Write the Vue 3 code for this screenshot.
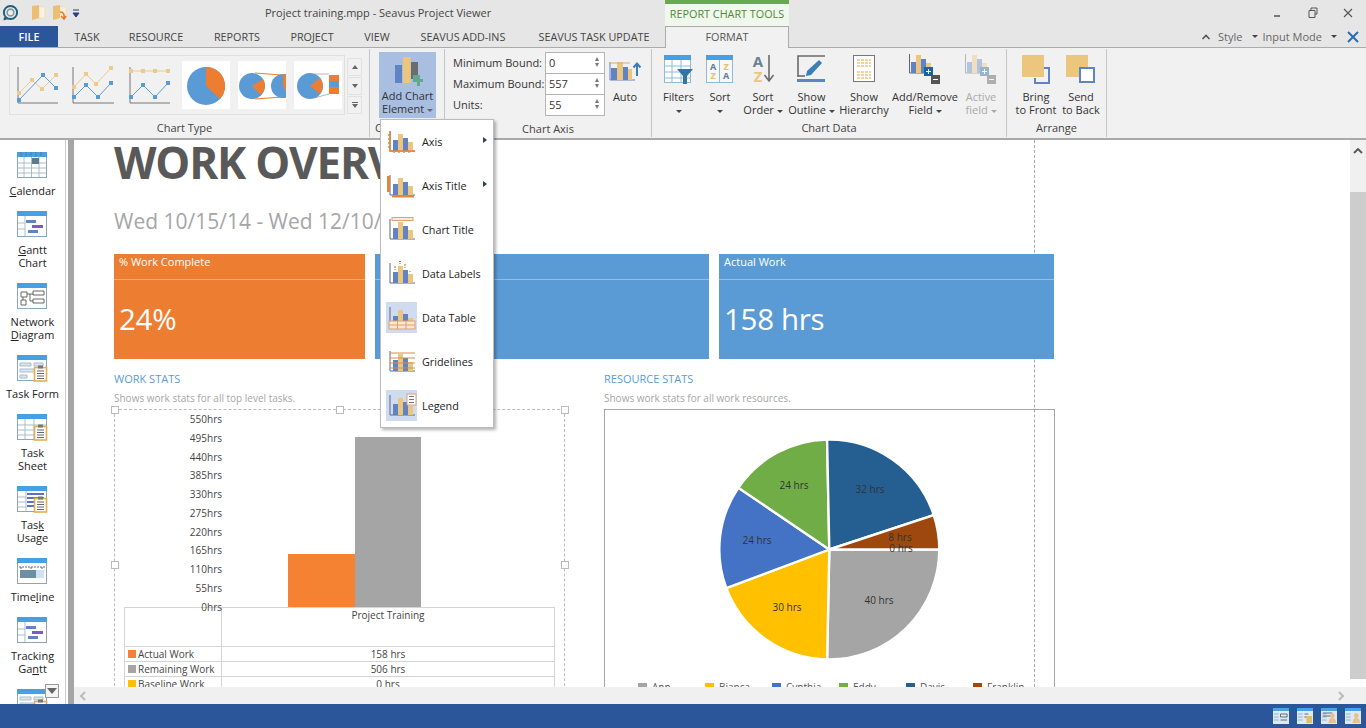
<script setup>
const tabs = [
  { label: 'TASK', width: 58 },
  { label: 'RESOURCE', width: 80 },
  { label: 'REPORTS', width: 82 },
  { label: 'PROJECT', width: 68 },
  { label: 'VIEW', width: 62 },
  { label: 'SEAVUS ADD-INS', width: 110 },
  { label: 'SEAVUS TASK UPDATE', width: 152 }
]

// sidebar views, pre/key/post splits the underlined mnemonic
const views = [
  { id: 'calendar', lines: [['', 'C', 'alendar']] },
  { id: 'gantt', lines: [['', 'G', 'antt'], ['Chart', '', '']] },
  { id: 'network', lines: [['Network', '', ''], ['', 'D', 'iagram']] },
  { id: 'form', lines: [['Task Form', '', '']] },
  { id: 'sheet', lines: [['Task', '', ''], ['Sheet', '', '']] },
  { id: 'usage', lines: [['Tas', 'k', ''], ['Usage', '', '']] },
  { id: 'timeline', lines: [['Time', 'l', 'ine']] },
  { id: 'tracking', lines: [['Tracking', '', ''], ['Ga', 'n', 'tt']] },
  { id: 'form', lines: [] }
]

const menuItems = [
  { label: 'Axis', kind: 'axis', arrow: true },
  { label: 'Axis Title', kind: 'axisTitle', arrow: true },
  { label: 'Chart Title', kind: 'chartTitle' },
  { label: 'Data Labels', kind: 'labels' },
  { label: 'Data Table', kind: 'table', on: true },
  { label: 'Gridelines', kind: 'grid' },
  { label: 'Legend', kind: 'legend', on: true }
]

const cards = [
  { title: '% Work Complete', value: '24%', color: 'orange' },
  { title: 'Remaining Work', value: '506 hrs', color: 'blue' },
  { title: 'Actual Work', value: '158 hrs', color: 'blue' }
]

const axisLabels = ['550hrs', '495hrs', '440hrs', '385hrs', '330hrs', '275hrs', '220hrs', '165hrs', '110hrs', '55hrs', '0hrs']

const workRows = [
  { name: 'Actual Work', value: '158 hrs', color: '#f58233' },
  { name: 'Remaining Work', value: '506 hrs', color: '#a5a5a5' },
  { name: 'Baseline Work', value: '0 hrs', color: '#ffc000' }
]

const people = [
  { name: 'Ann', hrs: 40, color: '#a5a5a5' },
  { name: 'Bianca', hrs: 30, color: '#ffc000' },
  { name: 'Cynthia', hrs: 24, color: '#4472c4' },
  { name: 'Eddy', hrs: 24, color: '#70ad47' },
  { name: 'Davis', hrs: 32, color: '#255e91' },
  { name: 'Franklin', hrs: 8, color: '#9e480e' }
]

const pieLabels = [
  { text: '40 hrs', x: 274, y: 194 },
  { text: '30 hrs', x: 182, y: 201 },
  { text: '24 hrs', x: 152, y: 134 },
  { text: '24 hrs', x: 189, y: 79 },
  { text: '32 hrs', x: 265, y: 83 },
  { text: '8 hrs', x: 295, y: 131 },
  { text: '0 hrs', x: 296, y: 142 }
]

const cx = 224.3
const cy = 139.5
const r = 110
const total = people.reduce((sum, p) => sum + p.hrs, 0)

let start = 0
const slices = people.map((p) => {
  const end = start + (p.hrs / total) * Math.PI * 2
  const x1 = cx + r * Math.cos(start)
  const y1 = cy + r * Math.sin(start)
  const x2 = cx + r * Math.cos(end)
  const y2 = cy + r * Math.sin(end)
  const large = end - start > Math.PI ? 1 : 0
  start = end
  return {
    color: p.color,
    d: `M${cx} ${cy}L${x1.toFixed(2)} ${y1.toFixed(2)}A${r} ${r} 0 ${large} 1 ${x2.toFixed(2)} ${y2.toFixed(2)}Z`
  }
})

const legendX = [33, 100, 167, 234, 301, 368]
</script>

<template>
  <div class="app">
    <!-- title bar -->
    <div class="titlebar">
      <div class="qat">
        <svg width="18" height="18" viewBox="0 0 18 18">
          <circle cx="9.5" cy="8.5" r="6.6" fill="#e8eef0" stroke="#1d5f80" stroke-width="2" />
          <circle cx="9.5" cy="8.5" r="3.4" fill="none" stroke="#8a9699" stroke-width="1.6" />
          <path d="M3 13 L2.5 16.5 L7 15 Z" fill="#1d5f80" />
        </svg>
        <svg class="folder first" width="16" height="18" viewBox="0 0 16 18">
          <path d="M8 3 H14 V14 H8 Z" fill="#fbf1de" stroke="#edd9b0" stroke-width=".6" />
          <path d="M1 2 L8 1 V14 L1 16 Z" fill="#ecbe73" />
        </svg>
        <svg class="folder" width="16" height="18" viewBox="0 0 16 18">
          <path d="M8 3 H14 V14 H8 Z" fill="#fbf1de" stroke="#edd9b0" stroke-width=".6" />
          <path d="M1 2 L8 1 V14 L1 16 Z" fill="#ecbe73" />
          <path d="M8 8 Q13 8 12 14 M9 12 L12 15 L14 12" fill="none" stroke="#e07b2e" stroke-width="1.6" />
        </svg>
        <svg class="qatMore" width="8" height="9" viewBox="0 0 8 9">
          <path d="M1 1 H7 M1 4 H7 L4 8 Z" fill="#2b3f78" stroke="#2b3f78" />
        </svg>
      </div>
      <div class="docTitle">Project training.mpp - Seavus Project Viewer</div>
      <div class="contextTab">REPORT CHART TOOLS</div>
      <div class="winBtns">
        <svg width="12" height="12" viewBox="0 0 12 12"><rect x="3" y="8" width="6" height="2" fill="#777" /></svg>
        <svg width="12" height="12" viewBox="0 0 12 12"><path d="M4 3 V1 H10 V7 H8 M2 3.5 H8 V10.5 H2 Z" fill="none" stroke="#555" /></svg>
        <svg width="12" height="12" viewBox="0 0 12 12"><path d="M2 2 L10 10 M10 2 L2 10" stroke="#555" stroke-width="1.1" /></svg>
      </div>
    </div>

    <!-- tabs -->
    <div class="tabrow">
      <div class="tab file">FILE</div>
      <div v-for="t in tabs" :key="t.label" class="tab" :style="{ width: t.width + 'px' }">{{ t.label }}</div>
      <div class="tab format">FORMAT</div>
      <div class="tabRight">
        <svg width="10" height="8" viewBox="0 0 10 8"><path d="M1.5 6 L5 2.5 L8.5 6" fill="none" stroke="#555" stroke-width="1.6" /></svg>
        <span class="styleLbl">Style</span>
        <span class="caret tabCaret"></span>
        <span class="modeLbl">Input Mode</span>
        <span class="caret tabCaret"></span>
        <svg class="tabClose" width="12" height="12" viewBox="0 0 12 12"><path d="M1 1 L11 11 M11 1 L1 11" stroke="#2b6cb0" stroke-width="2" /></svg>
      </div>
    </div>

    <!-- ribbon -->
    <div class="ribbon">
      <div class="group groupType">
        <div class="groupBody">
          <div class="gallery">
            <svg class="thumb" viewBox="0 0 48 48">
              <path d="M4 6 V42 H44" fill="none" stroke="#777" />
              <path d="M5 32 L18 19 L28 28 L42 14" fill="none" stroke="#ecc98d" />
              <path d="M5 39 L29 14 L42 27" fill="none" stroke="#5b9bd5" />
              <path d="M3 30h4v4h-4zM16 17h4v4h-4zM26 26h4v4h-4zM40 12h4v4h-4z" fill="#ecc98d" />
              <path d="M3 37h4v4h-4zM27 12h4v4h-4zM40 25h4v4h-4z" fill="#5b9bd5" />
            </svg>
            <svg class="thumb" viewBox="0 0 48 48">
              <path d="M3 6 V42 H44" fill="none" stroke="#777" />
              <path d="M4 26 L16 13 L26 23 L41 7" fill="none" stroke="#ecc98d" />
              <path d="M4 36 L16 24 L28 36 L41 22" fill="none" stroke="#5b9bd5" />
              <path d="M2 24h4v4h-4zM14 11h4v4h-4zM24 21h4v4h-4zM39 5h4v4h-4z" fill="#ecc98d" />
              <path d="M2 34h4v4h-4zM14 22h4v4h-4zM26 34h4v4h-4zM39 20h4v4h-4z" fill="#5b9bd5" />
            </svg>
            <svg class="thumb" viewBox="0 0 48 48">
              <path d="M4 6 V42 H44" fill="none" stroke="#777" />
              <path d="M5 10 H42" fill="none" stroke="#ecc98d" />
              <path d="M5 36 L17 24 L29 36 L42 22" fill="none" stroke="#5b9bd5" />
              <path d="M3 8h4v4h-4zM15 8h4v4h-4zM27 8h4v4h-4zM40 8h4v4h-4z" fill="#ecc98d" />
              <path d="M3 34h4v4h-4zM15 22h4v4h-4zM27 34h4v4h-4zM40 20h4v4h-4z" fill="#5b9bd5" />
            </svg>
            <svg class="thumb pieThumb" viewBox="0 0 48 48">
              <circle cx="24" cy="25" r="19" fill="#5b9bd5" />
              <path d="M24 25 L24 6 A19 19 0 0 1 38 38 Z" fill="#ed7d31" />
            </svg>
            <svg class="thumb pieThumb" viewBox="0 0 48 48">
              <circle cx="14" cy="25" r="13" fill="#5b9bd5" />
              <path d="M14 25 L25 18 A13 13 0 0 1 23 34 Z" fill="#ed7d31" />
              <path d="M17 12 L44 14 M17 38 L44 36" stroke="#ed7d31" />
              <circle cx="45" cy="25" r="12" fill="#5b9bd5" />
              <path d="M45 25 V13 H48 V30 Z" fill="#ed7d31" />
            </svg>
            <svg class="thumb pieThumb" viewBox="0 0 48 48">
              <circle cx="16" cy="25" r="13" fill="#5b9bd5" />
              <path d="M16 25 L26 17 A13 13 0 0 1 26 33 Z" fill="#ed7d31" />
              <path d="M20 13 H35 M20 37 L35 33" stroke="#999" stroke-width=".7" />
              <rect x="35" y="14" width="10" height="6" fill="#ed7d31" />
              <rect x="35" y="20" width="10" height="6" fill="#5b9bd5" />
              <rect x="35" y="26" width="10" height="7" fill="#ed7d31" />
            </svg>
            <div class="galleryBtns">
              <div class="galBtn"><span class="tri up"></span></div>
              <div class="galBtn"><span class="tri"></span></div>
              <div class="galBtn"><span class="bar"></span><span class="tri"></span></div>
            </div>
          </div>
        </div>
        <div class="groupLabel">Chart Type</div>
      </div>

      <div class="group groupElement">
        <div class="groupBody">
          <div class="addChart">
            <svg width="30" height="30" viewBox="0 0 30 30">
              <rect x="2" y="9" width="7" height="18" fill="#5f83c4" />
              <rect x="10" y="1" width="7.5" height="26" fill="#edc67e" />
              <rect x="18" y="6" width="7" height="17" fill="#6c6c6c" />
              <path d="M20 19 h4 v-0 h3 v4 h4 v3 h-4 v4 h-3 v-4 h-4 z" fill="#66a88f" />
            </svg>
            <div class="addLabel">Add Chart<br />Element <span class="caret light"></span></div>
          </div>
        </div>
        <div class="groupLabel clipLabel">Chart Layout</div>
      </div>

      <div class="group groupAxis">
        <div class="groupBody axisBody">
          <div class="bounds">
            <span>Minimum Bound:</span>
            <div class="spin">0<i></i></div>
            <span>Maximum Bound:</span>
            <div class="spin">557<i></i></div>
            <span>Units:</span>
            <div class="spin">55<i></i></div>
          </div>
          <div class="tool autoTool">
            <div class="toolIcon">
              <svg width="32" height="30" viewBox="0 0 32 30">
                <path d="M1 6 V24 H26" fill="none" stroke="#5f83c4" />
                <rect x="2" y="12" width="6" height="12" fill="#5f83c4" />
                <rect x="8" y="6" width="6" height="18" fill="#edc67e" />
                <rect x="14" y="11" width="5" height="13" fill="#5f83c4" />
                <rect x="19" y="13" width="4" height="11" fill="#edc67e" />
                <path d="M28 20 V8 M24.5 11.5 L28 7.5 L31.5 11.5" fill="none" stroke="#3c7fb8" stroke-width="2" />
                <path d="M1 7 H21" stroke="#e3a878" />
              </svg>
            </div>
            <div class="toolText">Auto</div>
          </div>
        </div>
        <div class="groupLabel">Chart Axis</div>
      </div>

      <div class="group groupData">
        <div class="groupBody dataBody">
          <div class="tool w41">
            <div class="toolIcon">
              <svg width="30" height="30" viewBox="0 0 30 30">
                <rect x=".5" y="2.5" width="26" height="26" fill="#fff" stroke="#8cbbdc" />
                <rect y="1" width="27" height="5" fill="#47a0e3" />
                <path d="M1 12 H27 M1 18 H27 M1 24 H27 M8 6 V28 M17 6 V28" stroke="#8cbbdc" />
                <path d="M13 15 H29 L23 22 V30 H19 V22 Z" fill="#2f75a6" />
              </svg>
            </div>
            <div class="toolText">Filters<br /><span class="caret"></span></div>
          </div>
          <div class="tool w42">
            <div class="toolIcon">
              <svg width="28" height="30" viewBox="0 0 28 30">
                <rect x=".5" y="2.5" width="26" height="26" fill="#f7f7f7" stroke="#8cbbdc" />
                <rect y="1" width="27" height="5" fill="#47a0e3" />
                <path d="M13.5 6 V28" stroke="#8cbbdc" />
                <text x="7" y="16" class="sortA">A</text>
                <text x="7" y="25" class="sortZ">Z</text>
                <text x="20" y="16" class="sortZ">Z</text>
                <text x="20" y="25" class="sortA">A</text>
              </svg>
            </div>
            <div class="toolText">Sort<br /><span class="caret"></span></div>
          </div>
          <div class="tool w44">
            <div class="toolIcon">
              <svg width="24" height="30" viewBox="0 0 24 30">
                <text x="7" y="13" class="orderA">A</text>
                <text x="7" y="28" class="orderZ">Z</text>
                <path d="M18 1 V26 M13.5 21 L18 27 L22.5 21" fill="none" stroke="#6b6b6b" stroke-width="1.6" />
              </svg>
            </div>
            <div class="toolText">Sort<br />Order <span class="caret"></span></div>
          </div>
          <div class="tool w53">
            <div class="toolIcon">
              <svg width="30" height="30" viewBox="0 0 30 30">
                <path d="M1 23 V2 H28" fill="none" stroke="#6a6a6a" stroke-width="1.6" />
                <path d="M1 22 H8" stroke="#6a6a6a" stroke-width="1.6" />
                <rect y="25" width="28" height="3" fill="#5f83c4" />
                <path d="M9 22 L10 17 L22 6 L25 9 L14 21 Z" fill="#3c7fb8" />
              </svg>
            </div>
            <div class="toolText">Show<br />Outline <span class="caret"></span></div>
          </div>
          <div class="tool w52">
            <div class="toolIcon">
              <svg width="24" height="30" viewBox="0 0 24 30">
                <rect x="1.5" y="1.5" width="21" height="26" fill="#fff" stroke="#777" />
                <path d="M5 6 H19 M5 9 H19 M5 12 H19 M5 18 H19 M5 21 H19 M5 24 H19" stroke="#e9c57f" stroke-width="1.4" stroke-dasharray="3 1" />
              </svg>
            </div>
            <div class="toolText">Show<br />Hierarchy</div>
          </div>
          <div class="tool w70">
            <div class="toolIcon">
              <svg width="32" height="30" viewBox="0 0 32 30">
                <path d="M.5 0 V19 H18" fill="none" stroke="#666" />
                <rect x="2" y="8" width="5" height="11" fill="#5f83c4" />
                <rect x="7" y="1" width="5" height="18" fill="#edc67e" />
                <rect x="12" y="5" width="5" height="14" fill="#5f83c4" />
                <rect x="17" y="9" width="5" height="10" fill="#edc67e" />
                <rect x="15" y="13" width="9" height="9" fill="#17639d" />
                <path d="M19.5 15 V20 M17 17.5 H22" stroke="#fff" />
                <rect x="22" y="21" width="9" height="9" fill="#555" />
                <path d="M24 25.5 H29" stroke="#fff" />
              </svg>
            </div>
            <div class="toolText">Add/Remove<br />Field <span class="caret"></span></div>
          </div>
          <div class="tool w42 disabled">
            <div class="toolIcon">
              <svg width="32" height="30" viewBox="0 0 32 30">
                <path d="M.5 0 V19 H18" fill="none" stroke="#666" />
                <rect x="2" y="8" width="5" height="11" fill="#5f83c4" />
                <rect x="7" y="1" width="5" height="18" fill="#edc67e" />
                <rect x="12" y="5" width="5" height="14" fill="#5f83c4" />
                <rect x="17" y="9" width="5" height="10" fill="#edc67e" />
                <rect x="15" y="13" width="9" height="9" fill="#17639d" />
                <path d="M19.5 15 V20 M17 17.5 H22" stroke="#fff" />
                <rect x="22" y="21" width="9" height="9" fill="#555" />
                <path d="M24 25.5 H29" stroke="#fff" />
              </svg>
            </div>
            <div class="toolText">Active<br />field <span class="caret"></span></div>
          </div>
        </div>
        <div class="groupLabel">Chart Data</div>
      </div>

      <div class="group groupArrange">
        <div class="groupBody arrangeBody">
          <div class="tool w44">
            <div class="toolIcon">
              <svg width="30" height="30" viewBox="0 0 30 30">
                <path d="M22 14 H28 V29 H14 V24" fill="none" stroke="#5f83c4" stroke-width="2" />
                <rect x="1" y="1" width="22" height="22" fill="#edc67e" />
              </svg>
            </div>
            <div class="toolText">Bring<br />to Front</div>
          </div>
          <div class="tool w46">
            <div class="toolIcon">
              <svg width="30" height="30" viewBox="0 0 30 30">
                <rect x="0" y="1" width="22" height="22" fill="#edc67e" />
                <rect x="14" y="14" width="14" height="14" fill="#fff" stroke="#5f83c4" stroke-width="2" />
              </svg>
            </div>
            <div class="toolText">Send<br />to Back</div>
          </div>
        </div>
        <div class="groupLabel">Arrange</div>
      </div>
    </div>

    <!-- main area -->
    <div class="main">
      <div class="sidebar">
        <div v-for="(v, i) in views" :key="i" class="view">
          <svg width="31" height="27" viewBox="0 0 31 27">
            <rect x=".5" y=".5" width="29" height="25" fill="#fff" stroke="#8fa6b8" />
            <rect width="30" height="5" fill="#47a0e3" />
            <template v-if="v.id === 'calendar'">
              <path d="M1 11 H29 M1 16 H29 M1 21 H29 M7 5 V25 M14.5 5 V25 M22 5 V25" stroke="#a9bdca" />
              <rect x="15" y="6" width="7" height="6" fill="#5a7c8f" />
              <path d="M4 0 V4 M9 0 V4 M14 0 V4 M19 0 V4 M24 0 V4" stroke="#5a7c8f" />
            </template>
            <template v-else-if="v.id === 'gantt' || v.id === 'tracking'">
              <path d="M1 12 H8 M1 18 H8 M8 5 V25" stroke="#a9bdca" />
              <rect x="9" y="9" width="10" height="3" fill="#5f83c4" />
              <rect x="15" y="14" width="11" height="3" fill="#7c5cc4" />
              <rect x="11" y="19" width="10" height="3" fill="#5f83c4" />
            </template>
            <template v-else-if="v.id === 'network'">
              <path d="M4 9 H10 V14 H4 Z M4 17 H9 V22 H4 Z M16 8 H27 V12 H16 Z M16 16 H27 V20 H16 Z M10 11 H16 M13 11 V18 H16 M6 14 V17" fill="none" stroke="#666" />
            </template>
            <template v-else-if="v.id === 'form'">
              <path d="M3 8 H14 V11 H3 Z M17 8 H26 V11 H17 Z M3 14 H20 V17 H3 Z M3 20 H10 V23 H3 Z" fill="#dbe6ef" stroke="#a9bdca" />
            </template>
            <template v-else-if="v.id === 'sheet'">
              <path d="M1 11 H29 M1 16 H29 M1 21 H29 M8 5 V25 M17 5 V25" stroke="#a9bdca" />
            </template>
            <template v-else-if="v.id === 'usage'">
              <path d="M1 11 H9 M1 16 H9 M1 21 H9 M9 5 V25" stroke="#a9bdca" />
              <path d="M10 8 H27 M10 12 H27 M10 16 H20 M10 20 H20" stroke="#5f6fc4" stroke-width="2" />
            </template>
            <template v-else-if="v.id === 'timeline'">
              <path d="M2 9 H28 M4 9 V11 M14 9 V11 M25 9 V11" stroke="#666" stroke-dasharray="2 1" />
              <rect x="3" y="12" width="24" height="8" fill="#cfe2f2" />
              <rect x="3" y="12" width="16" height="8" fill="#6d8fa3" />
            </template>
            <template v-if="['form', 'sheet', 'usage'].includes(v.id)">
              <rect x="17.5" y="12.5" width="12" height="13.5" fill="#fff" stroke="#e0b04f" stroke-width="1.6" />
              <rect x="21" y="10.5" width="5" height="3" fill="#777" />
              <path d="M20 16 H27 M20 18.5 H27 M20 21 H27 M20 23.5 H27" stroke="#666" />
            </template>
          </svg>
          <div class="viewLabel">
            <div v-for="(line, n) in v.lines" :key="n">{{ line[0] }}<u>{{ line[1] }}</u>{{ line[2] }}</div>
          </div>
        </div>
        <div class="moreViews"><span class="tri big"></span></div>
      </div>
      <div class="splitter"></div>

      <div class="workspace">
        <div class="viewRow">
          <div class="viewport">
            <div class="pageBreak"></div>
            <div class="report">
              <h1 class="heading">WORK OVERVIEW</h1>
              <div class="dates">Wed 10/15/14 - Wed 12/10/14</div>

              <div class="cards">
                <div v-for="c in cards" :key="c.title" class="card" :class="c.color">
                  <div class="cardTitle">{{ c.title }}</div>
                  <div class="cardValue">{{ c.value }}</div>
                </div>
              </div>

              <div class="stats">
                <section>
                  <div class="statTitle">WORK STATS</div>
                  <div class="statDesc">Shows work stats for all top level tasks.</div>
                  <div class="chartFrame selected">
                    <span class="handle h1"></span><span class="handle h2"></span><span class="handle h3"></span>
                    <span class="handle h4"></span><span class="handle h5"></span>
                    <svg class="barPlot" width="449" height="197" viewBox="0 0 449 197">
                      <rect x="173" y="144" width="67" height="53" fill="#f58233" />
                      <rect x="240" y="27" width="66" height="170" fill="#a5a5a5" />
                      <text v-for="(a, i) in axisLabels" :key="a" class="axisText" x="107" :y="13 + i * 18.75">{{ a }}</text>
                    </svg>
                    <table class="dataTable">
                      <tbody>
                        <tr class="headRow"><td></td><td class="center top">Project Training</td></tr>
                        <tr v-for="w in workRows" :key="w.name">
                          <td><span class="swatch" :style="{ background: w.color }"></span>{{ w.name }}</td>
                          <td class="center">{{ w.value }}</td>
                        </tr>
                      </tbody>
                    </table>
                  </div>
                </section>
                <section>
                  <div class="statTitle">RESOURCE STATS</div>
                  <div class="statDesc">Shows work stats for all work resources.</div>
                  <div class="chartFrame">
                    <svg width="449" height="300" viewBox="0 0 449 300">
                      <path v-for="s in slices" :key="s.color" :d="s.d" :fill="s.color" stroke="#fff" stroke-width="2.4" />
                      <text v-for="(l, i) in pieLabels" :key="i" class="pieText" :x="l.x" :y="l.y">{{ l.text }}</text>
                      <g v-for="(p, i) in people" :key="p.name">
                        <rect :x="legendX[i]" y="273" width="9" height="8" :fill="p.color" />
                        <text class="legendText" :x="legendX[i] + 14" y="281">{{ p.name }}</text>
                      </g>
                    </svg>
                  </div>
                </section>
              </div>
            </div>
          </div>
          <div class="vscroll">
            <svg class="arrowUp" width="16" height="10" viewBox="0 0 16 10"><path d="M4 7 L8 3 L12 7" fill="none" stroke="#555" stroke-width="1.8" /></svg>
            <div class="thumbBar"></div>
            <div class="downBtn"></div>
          </div>
        </div>
        <div class="hscroll">
          <svg width="8" height="10" viewBox="0 0 8 10"><path d="M6 1 L2 5 L6 9" fill="none" stroke="#bbb" stroke-width="2" /></svg>
          <svg width="8" height="10" viewBox="0 0 8 10"><path d="M2 1 L6 5 L2 9" fill="none" stroke="#bbb" stroke-width="2" /></svg>
        </div>
      </div>
    </div>

    <!-- status bar -->
    <div class="statusbar">
      <svg v-for="n in 4" :key="n" width="16" height="16" viewBox="0 0 17 16" preserveAspectRatio="none">
        <rect width="17" height="16" fill="#dfe9f2" />
        <rect width="17" height="3" fill="#4aa3e6" />
        <path d="M1 6 H6 M1 9 H6 M1 12 H6" stroke="#8fb3cc" />
        <path v-if="n === 1" d="M8 6 H15 V9 H8 Z M8 12 H15" fill="none" stroke="#5a6a78" />
        <path v-if="n === 2" d="M8 6 H12 M8 9 H12" stroke="#5a6a78" />
        <rect v-if="n === 2" x="10" y="8" width="6" height="7" fill="#e0c060" />
        <path v-if="n === 3" d="M2 5 H12 M2 8 H12" stroke="#5a6a78" />
        <path v-if="n >= 3" d="M8 15 Q8 10 12 10 Q16 10 16 15 Z" fill="#eac08a" />
        <circle v-if="n >= 3" cx="12" cy="7.5" r="2.5" fill="#eac08a" />
      </svg>
    </div>

    <!-- open dropdown -->
    <div class="menu">
      <div v-for="m in menuItems" :key="m.label" class="menuItem">
        <div class="menuIcon" :class="{ on: m.on }">
          <svg width="28" height="24" viewBox="0 0 28 24">
            <path d="M2 2 V22 H27" fill="none" stroke="#5d6b80" />
            <rect x="5" y="11" width="5" height="11" fill="#5f83c4" />
            <rect x="10" y="5" width="5" height="17" fill="#edc67e" />
            <rect x="15" y="9" width="5" height="13" fill="#5f83c4" />
            <rect x="20" y="13" width="5" height="9" fill="#edc67e" />
            <path v-if="m.kind === 'axis'" d="M2 2 V22 H27 M0 6 H2 M0 10 H2 M0 14 H2 M0 18 H2 M6 23 V24 M11 23 V24 M16 23 V24 M21 23 V24" fill="none" stroke="#e0873d" stroke-width="1.4" />
            <g v-if="m.kind === 'axisTitle'">
              <rect x="-1" y="3" width="3" height="16" fill="#e0873d" />
              <rect x="4" y="22" width="22" height="2.5" fill="#e0873d" />
            </g>
            <rect v-if="m.kind === 'chartTitle'" x="4" y=".5" width="21" height="3" fill="#fbeadb" stroke="#e0a070" />
            <path v-if="m.kind === 'labels'" d="M7 8 V9 M12 2 V3 M17 6 V7 M22 10 V11 M6 6 H8 M11 0.5 H13 M16 4 H18" stroke="#c06a2a" />
            <path v-if="m.kind === 'grid'" d="M2 4 H27 M2 9 H27 M2 14 H27 M2 19 H27" stroke="#d98b4c" />
            <g v-if="m.kind === 'table'">
              <rect x="1" y="16" width="26" height="8" fill="#fbe6cf" stroke="#e0a070" />
              <path d="M1 20 H27 M9.5 16 V24 M18 16 V24" stroke="#e0a070" />
            </g>
            <g v-if="m.kind === 'legend'">
              <rect x="19" y="1" width="9" height="11" fill="#fff" stroke="#e0a070" />
              <path d="M21 3.5 H26 M21 6.5 H26 M21 9.5 H26" stroke="#777" />
            </g>
          </svg>
        </div>
        <span class="menuLabel">{{ m.label }}</span>
        <span v-if="m.arrow" class="subArrow"></span>
      </div>
    </div>
  </div>
</template>

<style>
html, body {
  margin: 0;
  overflow: hidden;
}
</style>

<style scoped>
.app {
  position: relative;
  width: 1366px;
  height: 728px;
  overflow: hidden;
  display: flex;
  flex-direction: column;
  background: #e6e6e6;
  font-family: "Open Sans", "Noto Sans", sans-serif;
  font-size: 11px;
  color: #333;
}

.titlebar {
  height: 26px;
  display: flex;
  flex: none;
}
.qat {
  width: 265px;
  display: flex;
  align-items: center;
  padding-left: 1px;
  box-sizing: border-box;
}
.folder {
  margin-left: 5px;
}
.folder.first {
  margin-left: 12px;
}
.qatMore {
  margin-left: 4px;
}
.docTitle {
  width: 400px;
  line-height: 25px;
  color: #444;
}
.contextTab {
  width: 124px;
  box-sizing: border-box;
  background: #f0f7ec;
  border-top: 4px solid #6aa84f;
  color: #4e8a38;
  text-align: center;
  line-height: 19px;
  font-size: 10.8px;
}
.winBtns {
  margin-left: auto;
  width: 95px;
  display: flex;
  justify-content: space-between;
  align-items: center;
  padding-right: 12px;
  box-sizing: border-box;
}

.tabrow {
  height: 21px;
  display: flex;
  flex: none;
  position: relative;
  z-index: 2;
}
.tab {
  text-align: center;
  line-height: 22px;
  color: #444;
  font-size: 10.8px;
  flex: none;
}
.tab.file {
  width: 58px;
  background: #2b579a;
  color: #fff;
  font-weight: 600;
}
.tab.format {
  width: 124px;
  box-sizing: border-box;
  margin-left: -5px;
  height: 22px;
  margin-top: 0;
  background: #f1f1f1;
  border: 1px solid #ababab;
  border-bottom: none;
  line-height: 20px;
  color: #555;
}
.tabRight {
  margin-left: auto;
  display: flex;
  align-items: center;
  padding-right: 7px;
  color: #666;
}
.styleLbl {
  margin-left: 7px;
}
.tabCaret {
  margin-left: 9px;
  margin-right: 5px;
}
.tabClose {
  margin-left: 5px;
}

.caret {
  display: inline-block;
  width: 0;
  height: 0;
  border-left: 3px solid transparent;
  border-right: 3px solid transparent;
  border-top: 3px solid #444;
  vertical-align: middle;
}
.caret.light {
  border-top-color: #666;
}

.ribbon {
  height: 93px;
  flex: none;
  box-sizing: border-box;
  display: flex;
  background: #f1f1f1;
  border-top: 1px solid #ababab;
  border-bottom: 2px solid #a9a9a9;
}
.group {
  flex: none;
  display: flex;
  flex-direction: column;
  height: 88px;
  margin-top: 1px;
  border-right: 1px solid #c6c6c6;
  box-sizing: border-box;
}
.groupBody {
  height: 70px;
  display: flex;
}
.groupLabel {
  text-align: center;
  line-height: 17px;
  color: #444;
  white-space: nowrap;
  overflow: hidden;
}
.groupType { width: 370px; }
.groupElement { width: 75px; }
.groupAxis { width: 207px; }
.groupData { width: 355px; }
.groupArrange { width: 100px; }

.gallery {
  margin: 6px 0 0 9px;
  width: 336px;
  height: 60px;
  box-sizing: border-box;
  border: 1px solid #e0e0e0;
  display: flex;
  align-items: flex-start;
  gap: 8px;
  padding: 5px 0 0 4px;
  position: relative;
}
.thumb {
  width: 48px;
  height: 48px;
  flex: none;
}
.pieThumb {
  background: #fff;
}
.galleryBtns {
  position: absolute;
  left: 337px;
  top: 2px;
  width: 15px;
  display: flex;
  flex-direction: column;
}
.galBtn {
  height: 18px;
  box-sizing: border-box;
  border: 1px solid #e2e2e2;
  margin-bottom: 1px;
  display: flex;
  flex-direction: column;
  align-items: center;
  justify-content: center;
  gap: 1px;
}
.tri {
  display: block;
  width: 0;
  height: 0;
  border-left: 3px solid transparent;
  border-right: 3px solid transparent;
  border-top: 4px solid #666;
}
.tri.up {
  border-top: none;
  border-bottom: 4px solid #666;
}
.tri.big {
  border-left-width: 5px;
  border-right-width: 5px;
  border-top-width: 6px;
}
.bar {
  display: block;
  width: 6px;
  height: 1px;
  background: #666;
}

.addChart {
  width: 57px;
  height: 66px;
  margin: 3px 0 0 9px;
  background: #a9bfe2;
  display: flex;
  flex-direction: column;
  align-items: center;
  padding-top: 4px;
  box-sizing: border-box;
}
.addLabel {
  text-align: center;
  line-height: 13px;
  margin-top: 3px;
  white-space: nowrap;
}
.clipLabel {
  text-align: left;
  padding-left: 5px;
}

.axisBody {
  padding: 3px 0 0 8px;
}
.bounds {
  display: grid;
  grid-template-columns: 92px 60px;
  grid-auto-rows: 21px;
  align-items: center;
  white-space: nowrap;
  height: 63px;
}
.spin {
  height: 22px;
  box-sizing: border-box;
  background: #fff;
  border: 1px solid #b4b4b4;
  margin-bottom: -1px;
  padding-left: 3px;
  line-height: 20px;
  position: relative;
}
.spin i {
  position: absolute;
  right: 5px;
  top: 4px;
  width: 0;
  height: 0;
  border-left: 2.5px solid transparent;
  border-right: 2.5px solid transparent;
  border-bottom: 4px solid #777;
}
.spin i::after {
  content: "";
  position: absolute;
  left: -2.5px;
  top: 6px;
  width: 0;
  height: 0;
  border-left: 2.5px solid transparent;
  border-right: 2.5px solid transparent;
  border-top: 4px solid #777;
}

.dataBody {
  padding-left: 6px;
}
.arrangeBody {
  padding-left: 7px;
}
.tool {
  flex: none;
  text-align: center;
  padding-top: 5px;
  box-sizing: border-box;
  white-space: nowrap;
}
.toolIcon {
  height: 30px;
  display: flex;
  justify-content: center;
}
.toolText {
  margin-top: 6px;
  line-height: 13px;
}
.tool.autoTool {
  width: 40px;
  padding-top: 0;
}
.autoTool .toolIcon {
  height: 32px;
  align-items: flex-start;
}
.autoTool .toolIcon svg {
  margin-top: 4px;
}
.disabled .toolIcon {
  opacity: .42;
}
.disabled .toolText {
  color: #aaa;
}
.disabled .caret {
  border-top-color: #aaa;
}
.w41 { width: 41px; }
.w42 { width: 42px; }
.w44 { width: 44px; }
.w46 { width: 46px; }
.w52 { width: 52px; }
.w53 { width: 53px; }
.w70 { width: 70px; }

.sortA, .sortZ {
  font-size: 9px;
  font-weight: 700;
  text-anchor: middle;
}
.sortA { fill: #5a7c9f; }
.sortZ { fill: #e2bd75; }
.orderA, .orderZ {
  font-size: 15px;
  font-weight: 700;
  text-anchor: middle;
}
.orderA { fill: #6a7f94; }
.orderZ { fill: #edc67e; }

.main {
  height: 564px;
  flex: none;
  display: flex;
  background: #fff;
}
.sidebar {
  width: 65px;
  flex: none;
  height: 564px;
  padding-top: 12px;
  overflow: hidden;
  position: relative;
  box-sizing: border-box;
  background: #fff;
}
.view {
  display: flex;
  flex-direction: column;
  align-items: center;
  padding-bottom: 14px;
}
.view svg {
  flex: none;
}
.viewLabel {
  margin-top: 5px;
  text-align: center;
  line-height: 13px;
  color: #222;
  white-space: nowrap;
}
.moreViews {
  position: absolute;
  left: 45px;
  top: 544px;
  width: 14px;
  height: 14px;
  box-sizing: border-box;
  border: 1px solid #999;
  background: #f4f4f4;
  display: flex;
  align-items: center;
  justify-content: center;
}
.splitter {
  width: 9px;
  box-sizing: border-box;
  flex: none;
  background: #a6a6a6;
  border-left: 1px solid #c8c8c8;
  box-shadow: inset 2px 0 0 #fff;
}

.workspace {
  flex: 1;
  min-width: 0;
  display: flex;
  flex-direction: column;
}
.viewRow {
  height: 547px;
  display: flex;
  flex: none;
}
.viewport {
  flex: 1;
  min-width: 0;
  position: relative;
  overflow: hidden;
  background: #fff;
}
.pageBreak {
  position: absolute;
  left: 960px;
  top: 0;
  bottom: 0;
  border-left: 1px dashed #aaa;
}
.report {
  position: relative;
  padding-left: 40px;
}
.heading {
  margin: 0;
  height: 44px;
  line-height: 44px;
  font-size: 44px;
  font-weight: 700;
  letter-spacing: -1.2px;
  color: #595959;
  white-space: nowrap;
}
.dates {
  margin-top: 22px;
  height: 30px;
  line-height: 30px;
  font-size: 21px;
  color: #a6a6a6;
}
.cards {
  margin-top: 18px;
  display: grid;
  grid-template-columns: 251px 334px 335px;
  gap: 10px;
  position: relative;
}
.card {
  height: 105px;
  color: #fff;
}
.card.orange { background: #ed7d31; }
.card.blue { background: #5b9bd5; }
.cardTitle {
  height: 25px;
  padding-left: 5px;
  line-height: 16px;
  border-bottom: 1px solid rgba(255, 255, 255, .35);
}
.cardValue {
  padding-left: 5px;
  font-size: 29.5px;
  letter-spacing: -.3px;
  line-height: 78px;
}
.stats {
  display: grid;
  grid-template-columns: 451px 451px;
  gap: 39px;
  margin-top: 13px;
}
.statTitle {
  line-height: 14px;
  font-size: 11px;
  color: #5b9bd5;
}
.statDesc {
  margin-top: 5px;
  line-height: 14px;
  font-size: 10px;
  color: #a6a6a6;
}
.chartFrame {
  margin-top: 4px;
  height: 320px;
  border: 1px solid #a6a6a6;
  position: relative;
}
.chartFrame.selected {
  border: 1px dashed #bbb;
}
.chartFrame svg {
  display: block;
}
.barPlot {
  overflow: visible;
  position: relative;
  z-index: 1;
}
.axisText {
  font-size: 10px;
  fill: #444;
  text-anchor: end;
}
.pieText {
  font-size: 10px;
  fill: #333;
  text-anchor: middle;
}
.legendText {
  font-size: 10px;
  fill: #555;
}
.handle {
  position: absolute;
  width: 6px;
  height: 6px;
  background: #fff;
  border: 1px solid #bbb;
  z-index: 2;
}
.h1 { left: -4px; top: -4px; }
.h2 { left: 221px; top: -4px; }
.h3 { left: 446px; top: -4px; }
.h4 { left: -4px; top: 151px; }
.h5 { left: 446px; top: 151px; }

.dataTable {
  margin-left: 9px;
  width: 431px;
  border-collapse: collapse;
  table-layout: fixed;
  font-size: 10px;
  color: #444;
}
.dataTable td {
  border: 1px solid #d4d4d4;
  height: 14px;
  line-height: 14px;
  padding: 0 0 0 3px;
  white-space: nowrap;
}
.dataTable td:first-child {
  width: 93px;
}
.dataTable .headRow td {
  height: 38px;
}
.dataTable td.center {
  text-align: center;
  padding: 0;
}
.dataTable td.top {
  vertical-align: top;
}
.swatch {
  display: inline-block;
  width: 8px;
  height: 8px;
  margin-right: 2px;
}

.vscroll {
  width: 16px;
  flex: none;
  background: #f0f0f0;
  position: relative;
  display: flex;
  flex-direction: column;
  align-items: center;
}
.arrowUp {
  margin-top: 6px;
}
.thumbBar {
  position: absolute;
  top: 52px;
  left: 0;
  right: 0;
  bottom: 8px;
  background: #cdcdcd;
}
.downBtn {
  position: absolute;
  left: 0;
  right: 0;
  bottom: 0;
  height: 8px;
  background: #fff;
}
.hscroll {
  height: 17px;
  flex: none;
  background: #f0f0f0;
  display: flex;
  align-items: center;
  justify-content: space-between;
  padding: 0 21px 0 5px;
}

.statusbar {
  height: 24px;
  flex: none;
  background: #2b579a;
  display: flex;
  justify-content: flex-end;
  align-items: center;
  gap: 8px;
  padding-right: 5px;
  box-sizing: border-box;
}

.menu {
  position: absolute;
  left: 380px;
  top: 119px;
  width: 114px;
  height: 309px;
  box-sizing: border-box;
  background: #fff;
  border: 1px solid #bcbcbc;
  box-shadow: 2px 2px 3px rgba(0, 0, 0, .3);
  z-index: 5;
}
.menuItem {
  height: 44px;
  display: flex;
  align-items: center;
  position: relative;
  color: #222;
  top: -1px;
}
.menuIcon {
  width: 31px;
  height: 31px;
  margin-left: 5px;
  display: flex;
  align-items: center;
  justify-content: center;
}
.menuIcon.on {
  background: #cfdcef;
}
.menuIcon svg {
  overflow: visible;
}
.menuLabel {
  margin-left: 5px;
  font-size: 10.8px;
}
.subArrow {
  position: absolute;
  left: 102px;
  top: 18px;
  width: 0;
  height: 0;
  border-top: 3.5px solid transparent;
  border-bottom: 3.5px solid transparent;
  border-left: 4px solid #2d3f5c;
}
</style>
